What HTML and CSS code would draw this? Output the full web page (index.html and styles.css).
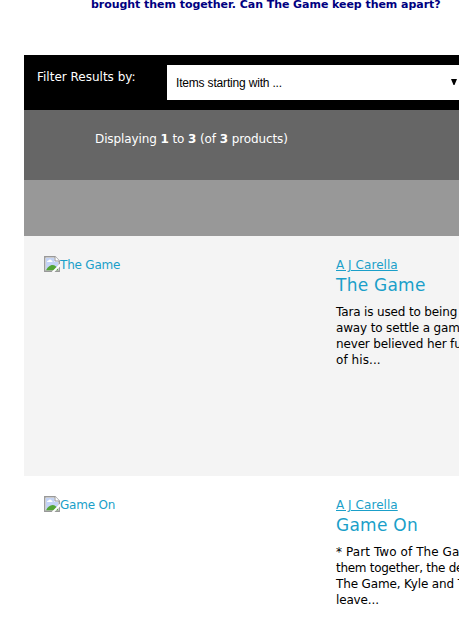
FILE: index.html
```
<!DOCTYPE html>
<html lang="en">
<head>
<meta charset="utf-8">
<title>Filter Results</title>
<link rel="stylesheet" href="styles.css">
</head>
<body>
<svg class="defs" aria-hidden="true">
  <symbol id="broken" viewBox="0 0 16 16">
    <path d="M.5.5h10.500l4.500 4.500v10.500H.5z" fill="#fff"/>
    <path d="M2 2h8.500v4H14v8H2z" fill="#c3d3f5"/>
    <path d="M3 6c0-1 1-1.500 1.500-1.500C5 3 7 3 7.500 4.500 8.500 4.500 9 6 8 6z" fill="#fff"/>
    <path d="M2 14.500c1-3 4-5.500 6.500-5.500s4 2 5.500 3v2.500z" fill="#52a536"/>
    <path d="M.75 15.250V.75H11l4.250 4.250v10.250z" fill="none" stroke="#989898" stroke-width="1.400"/>
    <path d="M11 .5V5h4.500" fill="#fff" stroke="#989898"/>
    <path class="tear" d="M8.500 16.500L16.500 8.500" fill="none" stroke-width="2"/>
  </symbol>
</svg>
<p class="tagline">brought them together. Can The Game keep them apart?</p>
<main class="results">
  <div class="filter">
    <span class="filter-label">Filter Results by:</span>
    <div class="select"><span class="select-text">Items starting with ...</span><svg class="arrow" viewBox="0 0 6 6"><path d="M0 0h6L3.500 6h-1z"/></svg></div>
  </div>
  <div class="count"><span>Displaying <b>1</b> to <b>3</b> (of <b>3</b> products)</span></div>
  <div class="band"></div>
  <article class="item shaded">
    <a class="thumb"><svg class="icon"><use href="#broken"/></svg><span>The Game</span></a>
    <div class="info">
      <a class="author">A J Carella</a>
      <h2 class="title">The Game</h2>
      <p class="text">Tara is used to being<br>away to settle a gam<br>never believed her fu<br><span class="wide">of his...</span></p>
    </div>
  </article>
  <article class="item">
    <a class="thumb"><svg class="icon"><use href="#broken"/></svg><span>Game On</span></a>
    <div class="info">
      <a class="author">A J Carella</a>
      <h2 class="title">Game On</h2>
      <p class="text"><span class="wide">* Part Two of The Ga</span><br><span class="tight">them together, the de</span><br>The Game, Kyle and T<br>leave...</p>
    </div>
  </article>
</main>
</body>
</html>
```
FILE: styles.css
```
body {
  margin: 0;
  height: 617px;
  overflow: hidden;
  background: #fff;
  color: #000;
  font: 12px/16px "DejaVu Sans", sans-serif;
  white-space: nowrap;
}
.defs { position: absolute; width: 0; height: 0; }
.tagline {
  height: 58px;
  margin: -3px 0 0 91px;
  color: #000080;
  font-size: 11px;
  font-weight: bold;
  letter-spacing: -0.05px;
}
.results { height: 562px; margin-left: 24px; overflow: hidden; }
.filter {
  display: flex;
  height: 35px;
  padding: 10px 0 10px 13px;
  background: #000;
}
.filter-label {
  width: 130px;
  padding-top: 4px;
  color: #fff;
}
.select {
  display: flex;
  flex: 1;
  align-items: center;
  justify-content: space-between;
  padding: 0 2px 0 9px;
  background: #fff;
  font-family: "Liberation Sans", sans-serif;
}
.select-text { letter-spacing: -0.18px; }
.arrow { width: 6px; height: 6px; margin-top: -2px; }
.count {
  height: 49px;
  padding: 21px 0 0 71px;
  background: #666;
  color: #fff;
  letter-spacing: -0.1px;
}
.band { height: 56px; background: #989898; }
.item {
  display: flex;
  height: 219px;
  padding: 21px 0 0 20px;
}
.shaded { background: #f4f4f4; }
.thumb {
  display: flex;
  width: 292px;
  flex: none;
  color: #1a9fc9;
  letter-spacing: -0.2px;
}
.icon { width: 16px; height: 16px; margin-top: -1px; }
.tear { stroke: #fff; }
.info { flex: none; }
.author {
  display: block;
  width: max-content;
  color: #1a9fc9;
  text-decoration: underline;
  letter-spacing: 0.05px;
}
.title {
  margin: 2px 0 9px;
  color: #1a9fc9;
  font-size: 17px;
  font-weight: normal;
  line-height: 20px;
  letter-spacing: 0.25px;
}
.text { margin: 0; letter-spacing: -0.15px; }
.wide { letter-spacing: 0.08px; }
.tight { letter-spacing: -0.28px; }
```
